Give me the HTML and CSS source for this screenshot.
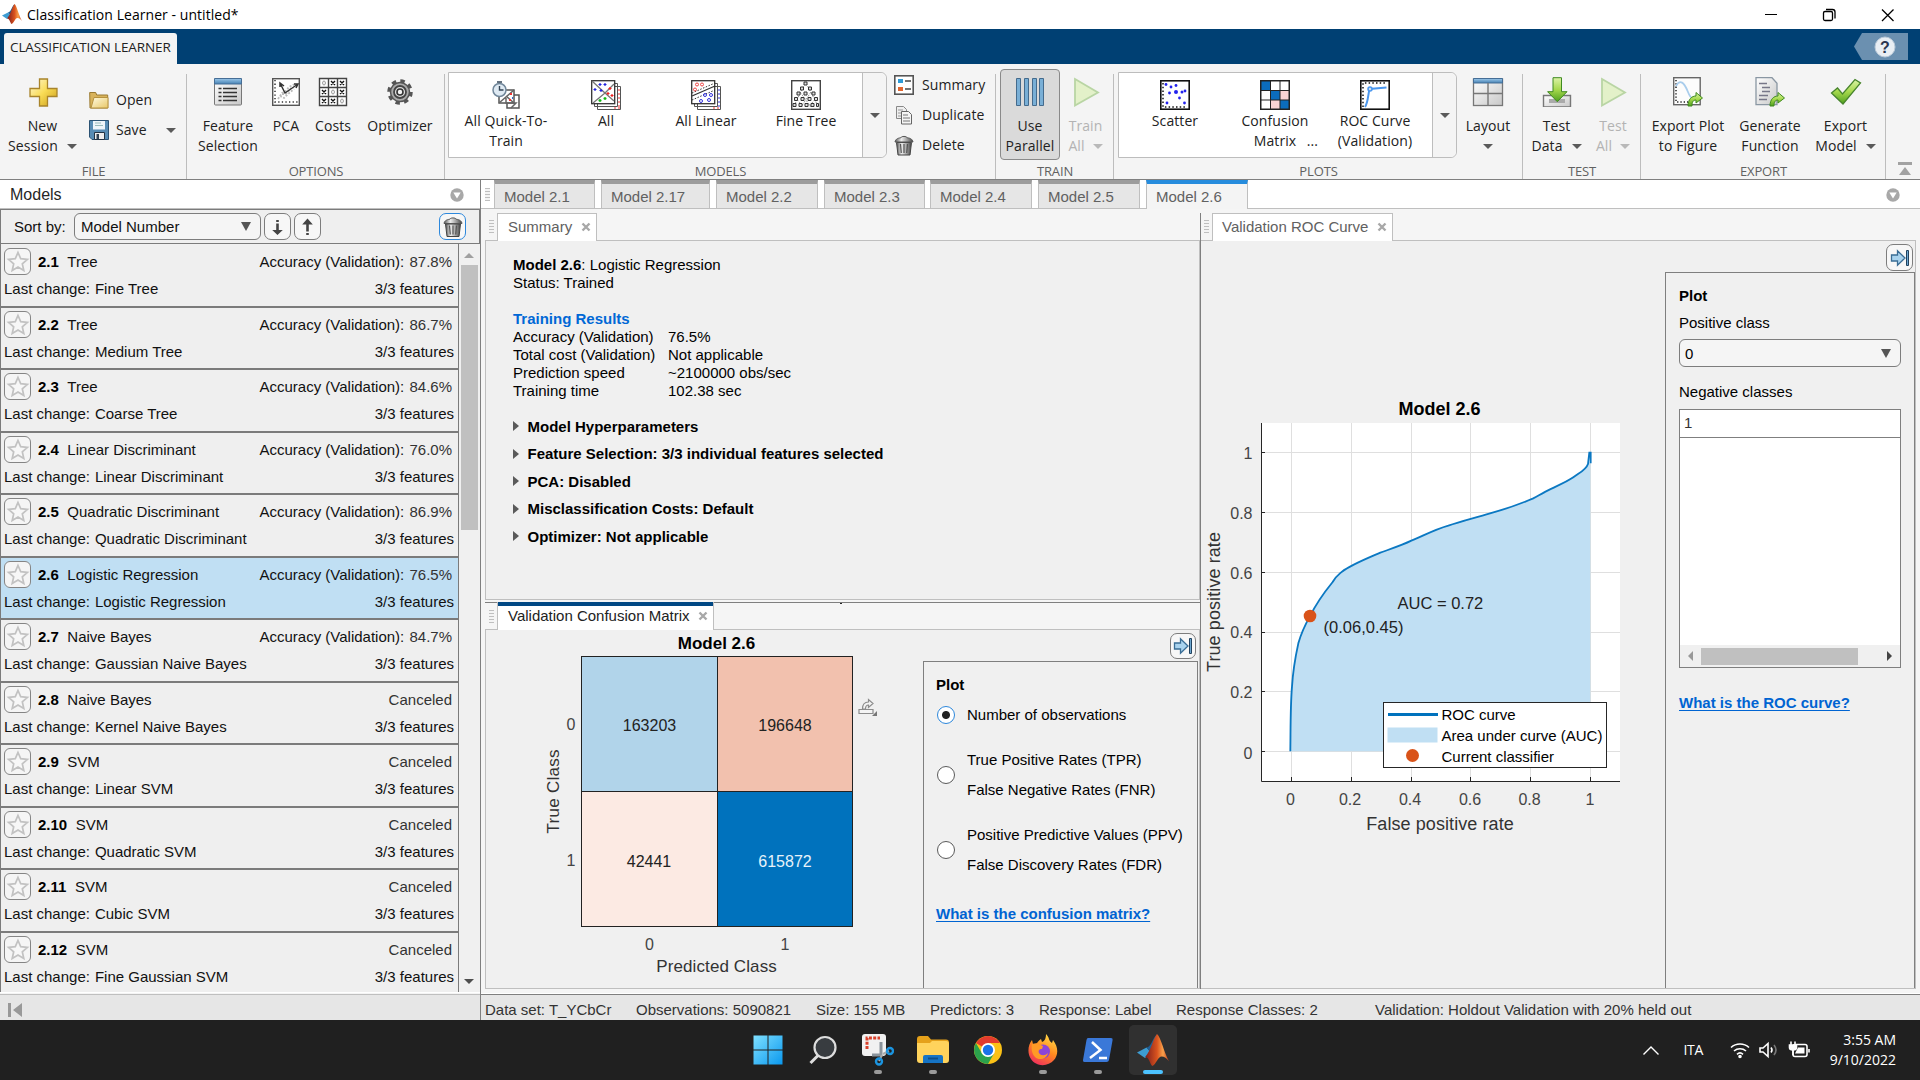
FILE: index.html
```html
<!DOCTYPE html>
<html lang="en">
<head>
<meta charset="utf-8">
<title>Classification Learner - untitled*</title>
<link rel="stylesheet" href="styles.css">
</head>
<body>
<svg class="defs" width="0" height="0">
  <defs>
    <linearGradient id="gold" x1="0" y1="0" x2="1" y2="1"><stop offset="0" stop-color="#fff9dc"/><stop offset=".5" stop-color="#f9dc55"/><stop offset="1" stop-color="#c99a18"/></linearGradient>
    <linearGradient id="folder" x1="0" y1="0" x2="1" y2="1"><stop offset="0" stop-color="#fffbe2"/><stop offset="1" stop-color="#e8c768"/></linearGradient>
    <linearGradient id="blueTop" x1="0" y1="0" x2="0" y2="1"><stop offset="0" stop-color="#9cc8ea"/><stop offset="1" stop-color="#4682b4"/></linearGradient>
    <linearGradient id="grey" x1="0" y1="0" x2="1" y2="1"><stop offset="0" stop-color="#fff"/><stop offset="1" stop-color="#c8c8c8"/></linearGradient>
    <linearGradient id="green" x1="0" y1="0" x2="0" y2="1"><stop offset="0" stop-color="#dcf3a8"/><stop offset=".5" stop-color="#a5d84c"/><stop offset="1" stop-color="#4fa01e"/></linearGradient>
    <linearGradient id="bin" x1="0" y1="0" x2="1" y2="0"><stop offset="0" stop-color="#555"/><stop offset=".35" stop-color="#eee"/><stop offset=".7" stop-color="#999"/><stop offset="1" stop-color="#444"/></linearGradient>
    <linearGradient id="flame" x1="0" y1="0" x2="1" y2="0"><stop offset="0" stop-color="#7a1c1c"/><stop offset=".5" stop-color="#d9531e"/><stop offset=".75" stop-color="#f9a04a"/><stop offset="1" stop-color="#c2391b"/></linearGradient>
    <linearGradient id="fox" x1=".8" y1="0" x2=".3" y2="1"><stop offset="0" stop-color="#ffe14a"/><stop offset=".5" stop-color="#ff8a1f"/><stop offset="1" stop-color="#f0305c"/></linearGradient>
    <linearGradient id="win" x1="0" y1="0" x2="1" y2="1"><stop offset="0" stop-color="#7fe0ff"/><stop offset="1" stop-color="#0a98ee"/></linearGradient>
    <symbol id="star" viewBox="0 0 25 25"><path d="M13 3.500l2.700 6.200 6.700.6-5.100 4.500 1.500 6.700-5.800-3.500-5.800 3.500 1.500-6.700-5.100-4.500 6.700-.6z" fill="#f7f7f7" stroke="#c2c2c2" stroke-width="1.700"/></symbol>
    <symbol id="trash" viewBox="0 0 20 20"><path d="M2.500 7h15l-1.500 12.500h-12z" fill="url(#bin)" stroke="#444"/><path d="M1 6.500C1.500 3 5 2.500 7 2.200 7 .5 13 .5 13 2.200c2 .3 5.500.8 6 4.300z" fill="url(#bin)" stroke="#555"/><path d="M6.500 8.500l.8 9M10 8.500v9M13.500 8.500l-.8 9" stroke="#555" stroke-width="1.200"/></symbol>
    <symbol id="matlab" viewBox="0 0 20 20"><path d="M0 11.500l6-3 3 3.500-4 3z" fill="#3d9cd2"/><path d="M6 8.500C9 8 9.500 3 12.500 0L10 8 9 12z" fill="#1f5f96"/><path d="M12.500 0C9.500 4 9.500 9 5 14.500c2.500-.5 3 4 4.500 5.500 2.500-1 3.500-6 6-6 1.500 0 3 1 4.500 3C17 12 15 2 12.500 0z" fill="url(#flame)"/></symbol>
    <symbol id="play" viewBox="0 0 28 30"><path d="M3 2l23 13.500L3 28.500z" fill="#e3f1c9" stroke="#b9d5a4" stroke-width="1.800"/></symbol>
    <symbol id="panelarrow" viewBox="0 0 20 20"><path d="M1.500 7h6V2.800l7.500 7.200-7.500 7.200V13h-6z" fill="#a9d3ee" stroke="#3a6d95" stroke-width="1.300"/><path d="M16.500 2.500h2v15h-2z" fill="#6da7d0" stroke="#21425f"/></symbol>
    <symbol id="circledown" viewBox="0 0 14 14"><circle cx="7" cy="7" r="6.700" fill="#a8a8a8"/><path d="M3.300 4.500h7.400L7 10.500z" fill="#fff"/></symbol>
    <symbol id="close" viewBox="0 0 10 10"><path d="M1.500 1.500l7 7M8.500 1.500l-7 7" stroke="#a8a8a8" stroke-width="2.400"/></symbol>
    <symbol id="share" viewBox="0 0 16 16"><path d="M1 15C1 8 5 5 9 5V1.500l6.500 5.500L9 12V9C6 9 5 11 5 15z" fill="url(#green)" stroke="#3e8a1c"/></symbol>
  </defs>
</svg>

<header class="titlebar">
  <svg class="app-icon" width="20" height="20"><use href="#matlab"/></svg>
  <span>Classification Learner - untitled*</span>
  <svg class="window-buttons" width="126" height="28" viewBox="0 0 126 28" fill="none" stroke="#000"><path d="M1 13.500h12"/><rect x="59.500" y="10.500" width="9" height="9" rx="1.500" stroke-width="1.300"/><path d="M62 8.500h6.500q2.500 0 2.500 2.500v6.500" stroke-width="1.300"/><path d="M118 8.500l11.500 11.500M129.500 8.500L118 20" stroke-width="1.300"/></svg>
</header>

<nav class="appbar">
  <div class="app-tab">CLASSIFICATION LEARNER</div>
  <svg class="help" width="54" height="27" viewBox="0 0 54 27"><path d="M0 13.500L8 0h46v27H8z" fill="#6b90b0"/><circle cx="31" cy="14" r="10" fill="#e9eef3" stroke="#b9c9d8"/><text x="31" y="19.500" text-anchor="middle" class="help-mark">?</text></svg>
</nav>

<section class="ribbon">
  <div class="group file">
    <div class="tools">
      <div class="tool w-new"><svg width="30" height="30" viewBox="0 0 30 30"><path d="M11.500 2h8v9.500H29v8h-9.500V29h-8v-9.500H2v-8h9.500z" fill="url(#gold)" stroke="#a8842b" stroke-width="1.300"/></svg><span>New</span><span class="split">Session<i class="caret"></i></span></div>
      <div class="small-tools">
        <div class="small"><svg width="20" height="18" viewBox="0 0 20 18"><path d="M1 17L.7 1.500h6l1 2.500h11V17z" fill="#d8b35c" stroke="#9a7a31"/><path d="M2 17L5 6.500h14V17z" fill="url(#folder)" stroke="#b6923f"/></svg><span>Open</span></div>
        <div class="small"><svg width="20" height="20" viewBox="0 0 20 20"><path d="M.5.500h19v19H3l-2.500-2.500z" fill="#578cb4" stroke="#2b5273"/><path d="M4 1h12v8.500H4z" fill="#eef5fa"/><path d="M6 3h6M6 5.500h8" stroke="#9bb"/><path d="M5.500 12.500h10v7h-10z" fill="#eee" stroke="#234"/><path d="M7.500 14h2.500v5H7.500z" fill="#345"/></svg><span>Save</span><i class="caret save-caret"></i></div>
      </div>
    </div>
    <div class="group-label">FILE</div>
  </div>

  <div class="group options">
    <div class="tools">
      <div class="tool w-feature"><svg width="30" height="30" viewBox="0 0 30 30"><rect x="1.500" y="2" width="27" height="26" rx="1" fill="url(#grey)" stroke="#777"/><path d="M1.500 1.500h27V7h-27z" fill="url(#blueTop)" stroke="#466e96"/><path d="M10 11.500h14M10 15.500h14M10 19.500h14M10 23.500h14" stroke="#333" stroke-width="1.500"/><path d="M5.500 11.500h3M5.500 15.500h3M5.500 19.500h3M5.500 23.500h3" stroke="#333" stroke-width="1.600"/></svg><span>Feature</span><span>Selection</span></div>
      <div class="tool w-pca"><svg width="30" height="30" viewBox="0 0 30 30"><rect x="1.700" y="1.700" width="26.600" height="26.600" fill="#fff" stroke="#555" stroke-width="1.400"/><path d="M4 3v22h23" stroke="#333" stroke-width="1.500" stroke-dasharray="1.300 2.300" fill="none"/><path d="M7 22l4-6 3-1 4-5 6-3M9 19l4 2 4-4 6-5M11 17h4l5-6" stroke="#bbb" stroke-width="1.800" stroke-dasharray="2 1.500" fill="none"/><path d="M9 6l5 10L27 7M9 10V6l4 3M23 7h4l-2 4" stroke="#333" stroke-width="1.500" fill="none"/></svg><span>PCA</span></div>
      <div class="tool w-costs"><svg width="30" height="30" viewBox="0 0 30 30"><path d="M1.500 1.500h27v27h-27zM10.500 1.500v27M19.500 1.500v27M1.500 10.500h27M1.500 19.500h27" fill="#fff" stroke="#444" stroke-width="1.400"/><path d="M13 4l4 4m0-4l-4 4M22 4l4 4m0-4l-4 4M4 13l4 4m0-4l-4 4M22 13l4 4m0-4l-4 4M4 22l4 4m0-4l-4 4M13 22l4 4m0-4l-4 4" stroke="#111" stroke-width="1.400"/><g fill="none" stroke="#999"><ellipse cx="6" cy="6" rx="1.400" ry="2"/><ellipse cx="15" cy="15" rx="1.400" ry="2"/><ellipse cx="24" cy="24" rx="1.400" ry="2"/></g></svg><span>Costs</span></div>
      <div class="tool w-optimizer"><svg width="30" height="30" viewBox="0 0 30 30"><circle cx="15" cy="15" r="11" fill="none" stroke="#555" stroke-width="3.500" stroke-dasharray="4.400 4.240"/><circle cx="15" cy="15" r="9.500" fill="#aaa" stroke="#555" stroke-width="1.500"/><circle cx="15" cy="15" r="6" fill="#ddd" stroke="#444" stroke-width="1.800"/><circle cx="15" cy="15" r="3" fill="#f5f5f5" stroke="#333" stroke-width="1.600"/></svg><span>Optimizer</span></div>
    </div>
    <div class="group-label">OPTIONS</div>
  </div>

  <div class="group models">
    <div class="tools">
      <div class="gallery">
        <div class="gallery-item"><svg width="30" height="30" viewBox="0 0 30 30"><path d="M16 15h12v13H16z" fill="#fff" stroke="#555" stroke-width="1.500"/><path d="M8 10h15v13H8z" fill="#fff" stroke="#555" stroke-width="1.500"/><path d="M8 23L23 10M15 16l8 7M15 18v5h10l-5 5" stroke="#666" stroke-width="1.500" fill="none"/><path d="M18 20h2M19 14h2" stroke="#e33" stroke-width="2"/><path d="M21 18h1" stroke="#36c" stroke-width="2"/><circle cx="8.500" cy="10" r="6.500" fill="#dfeaf3" stroke="#71879a" stroke-width="1.500"/><path d="M8.500 6v4h4M6 2h5" stroke="#345" stroke-width="1.400" fill="none"/></svg><span>All Quick-To-</span><span>Train</span></div>
        <div class="gallery-item"><svg width="30" height="30" viewBox="0 0 30 30"><path d="M6.500 6.500h23v23h-23zM3.500 3.500h23v23h-23z" fill="#fff" stroke="#555"/><path d="M23 28h6M28 9v19" stroke="#e33" stroke-dasharray="2 2"/><rect x=".7" y=".7" width="23" height="23" fill="#fff" stroke="#333" stroke-width="1.300"/><path d="M1 1l13 12L23 4M14 13L2 23M14 13l9 8" stroke="#777" stroke-width="1.300" fill="none"/><path d="M9 3v3M14 3v3M4 8v3M10 9v3M7.500 4.500h3M12.500 4.500h3M2.500 9.500h3M8.500 10.500h3" stroke="#22d" stroke-width="1.200"/><path d="M19 7v3M17.500 8.500h3M21 14v3M19.500 15.500h3M17 12v3M15.500 13.500h3" stroke="#e22" stroke-width="1.200"/><path d="M14 17v3M12.500 18.500h3M9 19v3M7.500 20.500h3" stroke="#1b1" stroke-width="1.300"/></svg><span>All</span></div>
        <div class="gallery-item"><svg width="30" height="30" viewBox="0 0 30 30"><path d="M6.500 6.500h23v23h-23zM3.500 3.500h23v23h-23z" fill="#fff" stroke="#555"/><path d="M22 28h6" stroke="#e33" stroke-dasharray="2 2"/><path d="M28 9v19" stroke="#33d" stroke-dasharray="2 2"/><rect x=".7" y=".7" width="23" height="23" fill="#fff" stroke="#333" stroke-width="1.300"/><path d="M1 16L24 6" stroke="#333" stroke-width="1.200"/><path d="M1 13L24 3M1 20L24 10" stroke="#333" stroke-dasharray="1.500 1.500"/><g fill="none" stroke="#e44"><circle cx="6" cy="4.500" r="1.500"/><circle cx="11" cy="4.500" r="1.500"/><circle cx="4" cy="9.500" r="1.500"/></g><g fill="none" stroke="#33d"><circle cx="14" cy="15" r="1.500"/><circle cx="18" cy="20" r="1.500"/><circle cx="10" cy="21" r="1.500"/><circle cx="20" cy="15" r="1.500"/></g></svg><span>All Linear</span></div>
        <div class="gallery-item"><svg width="30" height="30" viewBox="0 0 30 30"><rect x=".7" y=".7" width="28.600" height="28.600" fill="#fff" stroke="#444" stroke-width="1.400"/><path d="M14 3L3 26M15 3l12 23M9 12l11 15M20 12L10 27M6 19l6 8M24 19l-6 8" stroke="#999" stroke-dasharray="2 1.500"/><g fill="#ddd" stroke="#333"><path d="M13 2h3v3h-3zM9.500 7h3v3h-3zM17.500 7h3v3h-3zM6 12h3v3H6zM13 12h3v3h-3zM21 12h3v3h-3zM3.500 17.500h3v3h-3zM10 17.500h3v3h-3zM17 17.500h3v3h-3zM23.500 17.500h3v3h-3zM2 23.500h3v3H2zM8 23.500h3v3H8zM14 23.500h3v3h-3zM20 23.500h3v3h-3zM25.500 23.500h2v3h-2z"/></g></svg><span>Fine Tree</span></div>
        <div class="gallery-more"><i class="caret"></i></div>
      </div>
      <div class="side-tools">
        <div class="small"><svg width="20" height="20" viewBox="0 0 20 20"><rect x=".8" y=".8" width="18.400" height="18.400" fill="#fff" stroke="#555" stroke-width="1.600"/><path d="M4 4h5v4H4z" fill="#2f9bd7"/><path d="M4 12h5v4H4z" fill="#e2662f"/><path d="M11 6h6M11 14h6" stroke="#444" stroke-width="1.400"/></svg><span>Summary</span></div>
        <div class="small"><svg width="20" height="20" viewBox="0 0 20 20"><path d="M2.500 1.500h7l3 3v9h-10z" fill="#eee" stroke="#888"/><path d="M4 5h5M4 8h5M4 11h4" stroke="#999"/><path d="M7.500 6.500h7l3 3v9.500h-10z" fill="#f5f5f5" stroke="#666"/><path d="M9 10h5M9 13h7M9 16h7" stroke="#777"/></svg><span>Duplicate</span></div>
        <div class="small"><svg width="20" height="21"><use href="#trash"/></svg><span>Delete</span></div>
      </div>
    </div>
    <div class="group-label">MODELS</div>
  </div>

  <div class="group train">
    <div class="tools">
      <div class="tool pressed"><svg width="30" height="30" viewBox="0 0 30 30"><g fill="#79afd6" stroke="#446b8d"><path d="M1.500 1.500h4v27h-4zM9.500 1.500h4v27h-4zM17.500 1.500h4v27h-4zM24.500 1.500h4v27h-4z"/></g></svg><span>Use</span><span>Parallel</span></div>
      <div class="tool w-train disabled"><svg width="30" height="30"><use href="#play"/></svg><span>Train</span><span class="split">All<i class="caret"></i></span></div>
    </div>
    <div class="group-label">TRAIN</div>
  </div>

  <div class="group plots">
    <div class="tools">
      <div class="gallery">
        <div class="gallery-item"><svg width="30" height="30" viewBox="0 0 30 30"><rect x=".8" y=".8" width="28.400" height="28.400" fill="#fff" stroke="#111" stroke-width="1.600"/><path d="M3 3v24h24" fill="none" stroke="#111" stroke-width="1.500" stroke-dasharray="1.500 2.200"/><g fill="#22e"><circle cx="6" cy="4.500" r="1.400"/><circle cx="11" cy="7" r="1.400"/><circle cx="16" cy="5.500" r="1.400"/><circle cx="9.500" cy="13" r="1.400"/><circle cx="16" cy="12" r="2"/><circle cx="22" cy="12" r="1.500"/><circle cx="25" cy="11" r="1.400"/><circle cx="19.500" cy="18" r="1.400"/><circle cx="7" cy="23" r="1.400"/><circle cx="24.500" cy="23" r="1.400"/></g></svg><span>Scatter</span></div>
        <div class="gallery-item"><svg width="30" height="30" viewBox="0 0 30 30"><path d="M0 0h30v30H0z" fill="#222"/><path d="M11 1.500h8.500V10H11zM20.500 1.500h8V10h-8zM1.500 11H10v8.500H1.500zM1.500 20.500H10v8H1.500z" fill="#fff"/><path d="M1.500 1.500H10V10H1.500zM11 11h8.500v8.500H11zM20.500 20.500h8v8h-8z" fill="#0b6cbc"/><path d="M20.500 11h8v8.500h-8zM11 20.500h8.500v8H11z" fill="#f8d3d3"/></svg><span>Confusion</span><span class="ellipsis">Matrix<b>...</b></span></div>
        <div class="gallery-item"><svg width="30" height="30" viewBox="0 0 30 30"><rect x=".8" y=".8" width="28.400" height="28.400" fill="#fff" stroke="#111" stroke-width="1.600"/><path d="M3 27V3h24" fill="none" stroke="#111" stroke-width="1.500" stroke-dasharray="1.500 2.200"/><path d="M5 27C8 23 8 15 9.500 9l17-1.500" fill="none" stroke="#4a97ee" stroke-width="2"/><circle cx="10" cy="9" r="2" fill="#cde" stroke="#4a97ee" stroke-width="1.500"/></svg><span>ROC Curve</span><span>(Validation)</span></div>
        <div class="gallery-more"><i class="caret"></i></div>
      </div>
      <div class="tool w-layout"><svg width="32" height="30" viewBox="0 0 32 30"><rect x="1.500" y="2" width="29" height="26.500" fill="url(#grey)" stroke="#777" stroke-width="1.300"/><path d="M1.500 1.500h29v4.500h-29z" fill="url(#blueTop)" stroke="#466e96"/><path d="M16 6v22M2 16.500h28" stroke="#777" stroke-width="1.400"/></svg><span>Layout</span><span class="split only"><i class="caret"></i></span></div>
    </div>
    <div class="group-label plots-label">PLOTS</div>
  </div>

  <div class="group test">
    <div class="tools">
      <div class="tool w-testdata"><svg width="30" height="30" viewBox="0 0 30 30"><path d="M1.500 18.500h27V30h-27z" fill="url(#grey)" stroke="#777" stroke-width="1.400"/><path d="M7 22h16v4H7z" fill="#aaa"/><path d="M11 .7h8.500v14h5.500l-9.700 10-9.700-10H11z" fill="url(#green)" stroke="#3f8a20"/></svg><span>Test</span><span class="split">Data<i class="caret"></i></span></div>
      <div class="tool w-testall disabled"><svg width="30" height="30"><use href="#play"/></svg><span>Test</span><span class="split">All<i class="caret"></i></span></div>
    </div>
    <div class="group-label">TEST</div>
  </div>

  <div class="group export">
    <div class="tools">
      <div class="tool w-plot"><svg width="32" height="30" viewBox="0 0 32 30"><rect x="1.700" y=".7" width="26.500" height="27" fill="#fcfcfc" stroke="#666" stroke-width="1.400"/><path d="M4 3v22h12" fill="none" stroke="#222" stroke-width="1.500" stroke-dasharray="1.300 2"/><path d="M4 9C8 2 12 5 16 15s6 5 8 4" fill="none" stroke="#a9cdec" stroke-width="1.800"/><use href="#share" x="15" y="14" width="16" height="16"/></svg><span>Export Plot</span><span>to Figure</span></div>
      <div class="tool w-generate"><svg width="32" height="30" viewBox="0 0 32 30"><path d="M2 .7h16l5 5.500v21.500H2z" fill="url(#grey)" stroke="#8a97a3" stroke-width="1.300"/><path d="M5 6.500h8M8 10.500h8M8 14.500h8M5 18.500h9M5 22.500h8" stroke="#778" stroke-width="1.600"/><use href="#share" x="15" y="14" width="16" height="16"/></svg><span>Generate</span><span>Function</span></div>
      <div class="tool w-exportmodel"><svg width="32" height="30" viewBox="0 0 32 30"><path d="M1.500 16l6-5 5 6L25 2.500l5.500 3.500L13 27z" fill="url(#green)" stroke="#47842c" stroke-width="1.300"/></svg><span>Export</span><span class="split">Model<i class="caret"></i></span></div>
    </div>
    <div class="group-label">EXPORT</div>
  </div>
  <svg class="collapse" width="14" height="14" viewBox="0 0 14 14" fill="#a2a2a2"><path d="M0 0h14v3H0zM7 5l6 8H1z"/></svg>
</section>

<main class="workspace">
  <aside class="model-pane">
    <div class="pane-title">Models<svg width="14" height="14"><use href="#circledown"/></svg></div>
    <div class="sortbar">
      <span>Sort by:</span>
      <div class="select sort-select">Model Number<i class="tri"></i></div>
      <div class="icon-btn"><svg width="25" height="25" viewBox="0 0 25 25"><path d="M11.200 6h2.600v2h-2.600zM11.200 9.500h2.600V16h4L12.500 21l-5.300-5h4z" fill="#444"/></svg></div>
      <div class="icon-btn"><svg width="25" height="25" viewBox="0 0 25 25"><path d="M11.200 19h2.600v2h-2.600zM11.200 17.500h2.600V10.500h4L12.500 4.500l-5.300 6h4z" fill="#444"/></svg></div>
      <div class="icon-btn delete"><svg width="20" height="20"><use href="#trash"/></svg></div>
    </div>
    <div class="list-wrap">
      <div class="model-list">
        <article class="model"><div class="line"><i class="fav"><svg><use href="#star"/></svg></i><b>2.1</b><span>Tree</span><em>Accuracy (Validation): <s>87.8%</s></em></div><div class="line sub"><span>Last change:</span><span>Fine Tree</span><em>3/3 features</em></div></article>
        <article class="model"><div class="line"><i class="fav"><svg><use href="#star"/></svg></i><b>2.2</b><span>Tree</span><em>Accuracy (Validation): <s>86.7%</s></em></div><div class="line sub"><span>Last change:</span><span>Medium Tree</span><em>3/3 features</em></div></article>
        <article class="model"><div class="line"><i class="fav"><svg><use href="#star"/></svg></i><b>2.3</b><span>Tree</span><em>Accuracy (Validation): <s>84.6%</s></em></div><div class="line sub"><span>Last change:</span><span>Coarse Tree</span><em>3/3 features</em></div></article>
        <article class="model"><div class="line"><i class="fav"><svg><use href="#star"/></svg></i><b>2.4</b><span>Linear Discriminant</span><em>Accuracy (Validation): <s>76.0%</s></em></div><div class="line sub"><span>Last change:</span><span>Linear Discriminant</span><em>3/3 features</em></div></article>
        <article class="model"><div class="line"><i class="fav"><svg><use href="#star"/></svg></i><b>2.5</b><span>Quadratic Discriminant</span><em>Accuracy (Validation): <s>86.9%</s></em></div><div class="line sub"><span>Last change:</span><span>Quadratic Discriminant</span><em>3/3 features</em></div></article>
        <article class="model selected"><div class="line"><i class="fav"><svg><use href="#star"/></svg></i><b>2.6</b><span>Logistic Regression</span><em>Accuracy (Validation): <s>76.5%</s></em></div><div class="line sub"><span>Last change:</span><span>Logistic Regression</span><em>3/3 features</em></div></article>
        <article class="model"><div class="line"><i class="fav"><svg><use href="#star"/></svg></i><b>2.7</b><span>Naive Bayes</span><em>Accuracy (Validation): <s>84.7%</s></em></div><div class="line sub"><span>Last change:</span><span>Gaussian Naive Bayes</span><em>3/3 features</em></div></article>
        <article class="model"><div class="line"><i class="fav"><svg><use href="#star"/></svg></i><b>2.8</b><span>Naive Bayes</span><em><s>Canceled</s></em></div><div class="line sub"><span>Last change:</span><span>Kernel Naive Bayes</span><em>3/3 features</em></div></article>
        <article class="model"><div class="line"><i class="fav"><svg><use href="#star"/></svg></i><b>2.9</b><span>SVM</span><em><s>Canceled</s></em></div><div class="line sub"><span>Last change:</span><span>Linear SVM</span><em>3/3 features</em></div></article>
        <article class="model"><div class="line"><i class="fav"><svg><use href="#star"/></svg></i><b>2.10</b><span>SVM</span><em><s>Canceled</s></em></div><div class="line sub"><span>Last change:</span><span>Quadratic SVM</span><em>3/3 features</em></div></article>
        <article class="model"><div class="line"><i class="fav"><svg><use href="#star"/></svg></i><b>2.11</b><span>SVM</span><em><s>Canceled</s></em></div><div class="line sub"><span>Last change:</span><span>Cubic SVM</span><em>3/3 features</em></div></article>
        <article class="model"><div class="line"><i class="fav"><svg><use href="#star"/></svg></i><b>2.12</b><span>SVM</span><em><s>Canceled</s></em></div><div class="line sub"><span>Last change:</span><span>Fine Gaussian SVM</span><em>3/3 features</em></div></article>
      </div>
      <div class="scrollbar"><i class="up"></i><div class="thumb"></div><i class="down"></i></div>
    </div>
    <footer class="status left"><svg width="14" height="14" viewBox="0 0 14 14" fill="#999"><path d="M0 0h3v14H0zM14 0v14L5 7z"/></svg></footer>
  </aside>

  <section class="documents">
    <div class="doc-tabs">
      <i class="grip"></i>
      <div class="doc-tab t1">Model 2.1</div>
      <div class="doc-tab t2">Model 2.17</div>
      <div class="doc-tab t3">Model 2.2</div>
      <div class="doc-tab t4">Model 2.3</div>
      <div class="doc-tab t5">Model 2.4</div>
      <div class="doc-tab t6">Model 2.5</div>
      <div class="doc-tab t7 active">Model 2.6</div>
      <svg width="14" height="14"><use href="#circledown"/></svg>
    </div>

    <div class="doc-body">
      <div class="column main-column">
        <section class="panel summary-panel">
          <div class="panel-tabs"><i class="grip"></i><div class="panel-tab">Summary<svg width="10" height="10"><use href="#close"/></svg></div></div>
          <div class="panel-body summary">
            <p><b>Model 2.6</b>: Logistic Regression</p>
            <p>Status: Trained</p>
            <h3>Training Results</h3>
            <dl>
              <dt>Accuracy (Validation)</dt><dd>76.5%</dd>
              <dt>Total cost (Validation)</dt><dd>Not applicable</dd>
              <dt>Prediction speed</dt><dd>~2100000 obs/sec</dd>
              <dt>Training time</dt><dd>102.38 sec</dd>
            </dl>
            <ul>
              <li>Model Hyperparameters</li>
              <li>Feature Selection: 3/3 individual features selected</li>
              <li>PCA: Disabled</li>
              <li>Misclassification Costs: Default</li>
              <li>Optimizer: Not applicable</li>
            </ul>
          </div>
        </section>
        <section class="panel confusion-panel">
          <div class="panel-tabs"><i class="grip"></i><div class="panel-tab focused">Validation Confusion Matrix<svg width="10" height="10"><use href="#close"/></svg></div><i class="splitter-dot"></i></div>
          <div class="panel-body split-body">
            <svg class="chart" width="437" height="358" viewBox="486 630 437 358">
              <g stroke="#222" stroke-width="1">
                <rect x="581.500" y="656.500" width="136" height="135" fill="#b1d4ea"/>
                <rect x="717.500" y="656.500" width="135" height="135" fill="#f2c1ae"/>
                <rect x="581.500" y="791.500" width="136" height="135" fill="#fceae3"/>
                <rect x="717.500" y="791.500" width="135" height="135" fill="#0072bd"/>
              </g>
              <text class="plot-title sz17" x="716.500" y="649">Model 2.6</text>
              <g class="tick cell"><text x="649.500" y="730.500">163203</text><text x="785" y="730.500">196648</text><text x="649" y="866.500">42441</text><text class="light" x="785" y="866.500">615872</text></g>
              <g class="tick"><text x="571" y="729.500">0</text><text x="571" y="866">1</text><text x="649.500" y="949.500">0</text><text x="785" y="949.500">1</text></g>
              <text class="axis sz17" x="716.500" y="972" textLength="120.500">Predicted Class</text>
              <text class="axis sz17" transform="translate(559 791.500) rotate(-90)" textLength="84">True Class</text>
              <g fill="#f4f4f4" stroke="#8c8c8c" stroke-width="1.200"><path d="M859 709.500h14v4h-14z"/><path d="M862.500 709c0-5 2.500-7 6-7v-2.500l4.500 4-4.500 4V705c-2 0-3 1.500-3 4z"/></g><path d="M877 711v5h-5z" fill="#777"/>
            </svg>
            <div class="plot-options confusion-options">
              <div class="option-bar"><div class="icon-btn"><svg width="20" height="20"><use href="#panelarrow"/></svg></div></div>
              <div class="option-box">
                <h4>Plot</h4>
                <label class="one"><i class="radio on"></i><span>Number of observations</span></label>
                <label><i class="radio"></i><span>True Positive Rates (TPR)<br>False Negative Rates (FNR)</span></label>
                <label><i class="radio"></i><span>Positive Predictive Values (PPV)<br>False Discovery Rates (FDR)</span></label>
                <a>What is the confusion matrix?</a>
              </div>
            </div>
          </div>
        </section>
      </div>

      <section class="panel roc-panel column">
        <div class="panel-tabs"><i class="grip"></i><div class="panel-tab">Validation ROC Curve<svg width="10" height="10"><use href="#close"/></svg></div></div>
        <div class="panel-body split-body">
          <svg class="chart" width="464" height="747" viewBox="1201 241 464 747">
            <path d="M1261 423h359v358h-359z" fill="#fff"/>
            <path d="M1291.500 423v358M1351.500 423v358M1411.500 423v358M1470.500 423v358M1530.500 423v358M1590.500 423v358M1261 452.500h359M1261 512.500h359M1261 572.500h359M1261 632.500h359M1261 691.500h359M1261 751.500h359" stroke="#dfdfdf"/>
            <g transform="translate(1190 380) scale(.33333)">
              <path d="M301 1114C302 1040 301 980 306 920C309 870 314 840 325 790C332 765 345 735 361 707C375 678 398 643 428 606C436 590 446 584 456 575C480 556 515 542 571 518C610 504 640 494 664 482C700 468 730 450 775 437C810 424 850 415 900 400C940 389 990 372 1028 356C1050 344 1065 335 1080 328C1110 314 1135 303 1150 292C1170 277 1188 270 1194 252L1201 245V1114z" fill="#c0dff3"/>
              <path d="M301 1114C302 1040 301 980 306 920C309 870 314 840 325 790C332 765 345 735 361 707C375 678 398 643 428 606C436 590 446 584 456 575C480 556 515 542 571 518C610 504 640 494 664 482C700 468 730 450 775 437C810 424 850 415 900 400C940 389 990 372 1028 356C1050 344 1065 335 1080 328C1110 314 1135 303 1150 292C1170 277 1188 270 1194 252L1198 218H1202V250" fill="none" stroke="#0b78c2" stroke-width="5.500"/>
              <circle cx="360" cy="708" r="19" fill="#d95319"/>
            </g>
            <path d="M1261.500 423v358.500H1620M1261 452.500h4M1261 512.500h4M1261 572.500h4M1261 632.500h4M1261 691.500h4M1261 751.500h4M1291.500 781v-4M1351.500 781v-4M1411.500 781v-4M1470.500 781v-4M1530.500 781v-4M1590.500 781v-4" stroke="#262626" fill="none"/>
            <text class="plot-title sz18" x="1439.500" y="415">Model 2.6</text>
            <g class="tick end"><text x="1252.500" y="458.500">1</text><text x="1252.500" y="518.500">0.8</text><text x="1252.500" y="578.500">0.6</text><text x="1252.500" y="637.500">0.4</text><text x="1252.500" y="698">0.2</text><text x="1252.500" y="758.500">0</text></g>
            <g class="tick"><text x="1290.500" y="804.500">0</text><text x="1350" y="804.500">0.2</text><text x="1410" y="804.500">0.4</text><text x="1470" y="804.500">0.6</text><text x="1529.500" y="804.500">0.8</text><text x="1590" y="804.500">1</text></g>
            <text class="axis sz18" x="1440" y="830" textLength="147.500">False positive rate</text>
            <text class="axis sz18" transform="translate(1220 602) rotate(-90)" textLength="140">True positive rate</text>
            <text class="note" x="1397.500" y="608.500">AUC = 0.72</text>
            <text class="note" x="1323.500" y="632.500" textLength="80">(0.06,0.45)</text>
            <rect x="1383.500" y="702.500" width="223" height="65" fill="#fff" stroke="#262626"/>
            <path d="M1388 714.500h50" stroke="#0072bd" stroke-width="3"/><path d="M1387.500 727.500h50v15h-50z" fill="#c0dff3"/><circle cx="1412.500" cy="755.500" r="6.500" fill="#d95319"/>
            <g class="legend"><text x="1441.500" y="720">ROC curve</text><text x="1441.500" y="741">Area under curve (AUC)</text><text x="1441.500" y="762">Current classifier</text></g>
          </svg>
          <div class="plot-options roc-options">
            <div class="option-bar"><div class="icon-btn"><svg width="20" height="20"><use href="#panelarrow"/></svg></div></div>
            <div class="option-box">
              <h4>Plot</h4>
              <p>Positive class</p>
              <div class="select">0<i class="tri"></i></div>
              <p class="negative">Negative classes</p>
              <div class="listbox"><div class="listrow">1</div><div class="hscroll"><i class="prev"></i><div class="hthumb"></div><i class="next"></i></div></div>
              <a>What is the ROC curve?</a>
            </div>
          </div>
        </div>
      </section>
    </div>

    <footer class="status facts">
      <span class="f1">Data set: T_YCbCr</span><span class="f2">Observations: 5090821</span><span class="f3">Size: 155 MB</span><span class="f4">Predictors: 3</span><span class="f5">Response: Label</span><span class="f6">Response Classes: 2</span><span class="f7">Validation: Holdout Validation with 20% held out</span>
    </footer>
  </section>
</main>

<footer class="taskbar">
  <div class="task-icons">
    <div class="task"><svg width="32" height="32" viewBox="0 0 32 32"><path d="M1.500 1.500h14v14h-14zM16.500 1.500h14v14h-14zM1.500 16.500h14v14h-14zM16.500 16.500h14v14h-14z" fill="url(#win)"/></svg></div>
    <div class="task"><svg width="32" height="32" viewBox="0 0 32 32"><circle cx="18" cy="13.500" r="10.500" fill="#383c40" stroke="#ddd" stroke-width="2.200"/><path d="M11 21.500l-7.500 7.500" stroke="#ddd" stroke-width="3"/></svg></div>
    <div class="task running"><svg width="32" height="32" viewBox="0 0 32 32"><rect x="0" y="0" width="24" height="22" rx="3" fill="#f1f1f1"/><path d="M5 15V4h13" fill="none" stroke="#d8402b" stroke-width="3" stroke-dasharray="3 1.300"/><path d="M19 8v13H10" fill="none" stroke="#8b949c" stroke-width="3"/><path d="M20 21l-3 6M21 20l6-3" stroke="#aaa" stroke-width="2"/><g fill="none" stroke="#1b94e0" stroke-width="2.400"><circle cx="17" cy="27.500" r="3"/><circle cx="28" cy="17" r="3"/></g></svg></div>
    <div class="task running"><svg width="32" height="32" viewBox="0 0 32 32"><path d="M0 5q0-3 3-3h8l3 3.500h15q3 0 3 3V14H0z" fill="#e5a11a"/><path d="M0 9h13l2-2h14q3 0 3 3v16q0 3-3 3H3q-3 0-3-3z" fill="#ffd35c"/><path d="M6 29v-6q0-2 2-2h16q2 0 2 2v6z" fill="#1674c5"/><path d="M11 24.500h10" stroke="#0c4e8a" stroke-width="2"/></svg></div>
    <div class="task"><svg width="32" height="32" viewBox="0 0 32 32"><circle cx="16" cy="16" r="14" fill="#fbc116"/><path d="M16 16L3.900 9A14 14 0 0 1 28.100 9H16z" fill="#e33b2e"/><path d="M3.900 9A14 14 0 0 0 16 30l6-10.500-6-3.500-6 3.500z" fill="#2ba24c"/><circle cx="16" cy="16" r="7" fill="#fff"/><circle cx="16" cy="16" r="5.200" fill="#1a73e8"/></svg></div>
    <div class="task running"><svg width="32" height="32" viewBox="0 0 32 32"><path d="M19 0c4 4 2 6 6 9l1-3c6 8 5 15 1 20-6 7-18 7-23-1C0 19 1 11 5 6l1 4 4-1c1-1 2-3 4-4l1 3c3-1 4-4 4-8z" fill="url(#fox)"/><circle cx="16" cy="17.500" r="7" fill="#8c45d8"/><path d="M5 10c5-1 8 1 11 2l-1 3c-3 0-4 2-3 4 2 3 6 3 9 0-1 6-9 8-13 4-3-3-4-8-3-13z" fill="#ff9a26"/></svg></div>
    <div class="task running"><svg width="32" height="32" viewBox="0 0 32 32"><path d="M6 4h23q2 0 1.600 2L27 26q-.4 2-2.500 2h-22Q.5 28 1 26L4.500 6Q4.900 4 6 4z" fill="#3a78d8"/><path d="M10 8l8.500 8L8 24M17 24h8" fill="none" stroke="#fff" stroke-width="2.500"/></svg></div>
    <div class="task current"><svg width="32" height="32"><use href="#matlab"/></svg></div>
  </div>
  <div class="tray">
    <svg width="18" height="12" viewBox="0 0 18 12"><path d="M1.500 10.500L9 3l7.500 7.500" fill="none" stroke="#fff" stroke-width="1.400"/></svg>
    <span class="lang">ITA</span>
    <svg class="tray-icons" width="82" height="20" viewBox="0 0 82 20" fill="none" stroke="#fff" stroke-width="1.600"><path d="M1 7.500a13.500 13.500 0 0 1 18 0M4 11a9 9 0 0 1 12 0M7 14.300a4.500 4.500 0 0 1 6 0"/><circle cx="10" cy="16.500" r="1" fill="#fff"/><path d="M30 8h3l5-4.500v13L33 12h-3zM41 7.500q2 2.500 0 5"/><path d="M44 5q4 5 0 10" stroke="#777"/><rect x="63" y="4.500" width="14" height="12" rx="2"/><path d="M79 9v3.500"/><path d="M68 7.500h6.500v6H65z" fill="#fff" stroke="none"/><path d="M61 1.500v3M65 1.500v3M59.500 5h7v2.500q0 2.500-3.500 2.500t-3.500-2.500zM63 10v5" fill="#fff"/></svg>
    <div class="clock"><span>3:55 AM</span><span>9/10/2022</span></div>
  </div>
</footer>
</body>
</html>
```
FILE: styles.css
```css
* { box-sizing: border-box; }
body {
  margin: 0; width: 1920px; height: 1080px; overflow: hidden;
  display: flex; flex-direction: column;
  font: 15px "Liberation Sans", Arial, sans-serif; color: #111; background: #f4f4f4;
}
.defs { position: absolute; }
svg { display: block; flex: none; }
p, h3, h4, dl, dd, ul { margin: 0; padding: 0; }
i, em { font-style: normal; }
s { text-decoration: none; color: #333; }

/* Window title */
.titlebar { height: 29px; flex: none; background: #fff; display: flex; align-items: center; padding-left: 2px; font: 14px "Open Sans", sans-serif; color: #000; }
.titlebar span { margin-left: 5px; letter-spacing: .05px; }
.app-icon { margin-top: -1px; }
.window-buttons { margin: 0 30px 0 auto; overflow: visible; }

.appbar { height: 35px; flex: none; background: #004073; display: flex; justify-content: space-between; padding: 4px 12px 0 4px; }
.app-tab { width: 173px; height: 31px; background: #f4f4f4; border-radius: 3px 3px 0 0; font: 13.500px/28px "Open Sans", sans-serif; letter-spacing: -.12px; padding-left: 6px; white-space: nowrap; color: #222; }
.help-mark { font: bold 16px "Liberation Sans", sans-serif; fill: #2a3550; }

/* Ribbon */
.ribbon { height: 116px; flex: none; display: flex; background: #f4f4f4; border-bottom: 1px solid #7f7f7f; font: 14px/20px "Open Sans", sans-serif; color: #222; letter-spacing: .08px; }
.group { display: flex; flex-direction: column; height: 115px; position: relative; flex: none; }
.group::after { content: ""; position: absolute; right: 0; top: 10px; bottom: 0; width: 1px; background: #bdbdbd; }
.group-label { height: 17px; line-height: 18px; text-align: center; color: #616161; font-size: 13px; letter-spacing: -.15px; }
.tools { display: flex; height: 98px; }
.file { width: 187px; } .options { width: 258px; } .models { width: 551px; }
.train { width: 118px; } .plots { width: 409px; } .test { width: 118px; } .export { width: 245px; }
.tool { display: flex; flex-direction: column; align-items: center; padding-top: 13px; white-space: nowrap; flex: none; }
.tool svg { margin-bottom: 9px; }
.tool span { height: 20px; }
.split { display: flex; align-items: center; gap: 9px; }
.only { padding-top: 0; }
.caret { width: 0; height: 0; flex: none; border: 5px solid transparent; border-top-color: #5a5a5a; border-bottom: 0; }
.disabled { color: #b3b3b3; }
.disabled .caret { border-top-color: #b9b9b9; }
.disabled .split { gap: 8px; }
.w-new { width: 85px; }
.options .w-feature { width: 82px; }
.options .w-pca { width: 34px; }
.options .w-costs { width: 60px; }
.options .w-optimizer { width: 74px; }
.small-tools { padding: 21px 0 0 4px; }
.small { display: flex; align-items: center; height: 30px; }
.small svg { margin-right: 7px; }
.save-caret { margin-left: 19px; }
.gallery { display: flex; height: 86px; margin: 8px 0 0 3px; border: 1px solid #bdbdbd; border-radius: 0 6px 6px 0; background: #fff; flex: none; }
.gallery-item { width: 100px; display: flex; flex-direction: column; align-items: center; padding-top: 7px; white-space: nowrap; }
.gallery-item svg { margin-bottom: 1px; }
.gallery-item:first-child { margin-left: 7px; }
.gallery-more { width: 24px; margin-left: auto; background: #f4f4f4; border-left: 1px solid #bdbdbd; border-radius: 0 6px 6px 0; display: flex; align-items: center; justify-content: center; }
.models .gallery { width: 439px; }
.plots .gallery { width: 339px; margin-left: 4px; }
.plots .gallery-item:first-child { margin-left: 6px; }
.ellipsis { position: relative; }
.ellipsis b { position: absolute; left: 53px; top: 0; font-weight: 400; }
.side-tools { padding: 6px 0 0 7px; }
.side-tools .small svg { margin-right: 8px; }
.pressed { width: 60px; height: 91px; margin: 5px 0 0 4px; padding-top: 7px; background: #dadada; border: 1px solid #8a8a8a; border-radius: 4px; }
.w-train { width: 51px; }
.w-layout { width: 62px; }
.w-testdata { width: 67px; } .w-testall { width: 46px; }
.w-plot { width: 94px; } .w-generate { width: 70px; } .w-exportmodel { width: 81px; }
.collapse { margin: 98px 0 0 12px; }

/* Workspace */
.workspace { display: flex; height: 840px; flex: none; }
.model-pane { width: 481px; display: flex; flex-direction: column; border-right: 1px solid #7f7f7f; flex: none; }
.pane-title { height: 29px; flex: none; background: #fff; border-bottom: 1px solid #bfbfbf; display: flex; align-items: center; justify-content: space-between; padding: 1px 16px 0 10px; font-size: 16px; color: #262626; }
.sortbar { height: 35px; flex: none; display: flex; align-items: center; border: 1px solid #7b7b7b; background: #efefef; padding-left: 13px; }
.sortbar > span { width: 60px; }
.select { display: flex; align-items: center; justify-content: space-between; background: #f5f5f5; border: 1px solid #7d7d7d; border-radius: 6px; }
.sort-select { width: 187px; height: 27px; padding: 0 9px 0 6px; margin-right: 3px; }
.tri { width: 0; height: 0; border: 5px solid transparent; border-top: 9px solid #555; border-bottom: 0; }
.icon-btn { width: 27px; height: 27px; border: 1px solid #7d7d7d; border-radius: 7px; background: #f7f7f7; margin-right: 3px; display: flex; align-items: center; justify-content: center; flex: none; }
.delete { border-color: #2d88dc; margin: 0 13px 0 auto; }
.list-wrap { display: flex; height: 749px; overflow: hidden; background: #f0f0f0; flex: none; border-bottom: 1px solid #fff; }
.model-list { width: 459px; border: solid #7b7b7b; border-width: 0 1px; height: 749px; padding-top: 1px; overflow: hidden; }
.model { height: 62.500px; background: #efefef; border-bottom: 2px solid #7b7b7b; padding: 3px 4px 0 3px; }
.model:last-child { border-bottom: 0; }
.selected { background: #c0dff3; }
.line { display: flex; align-items: center; height: 27px; white-space: nowrap; }
.line b { margin: 0 8.500px 0 7px; color: #000; }
.line em { margin-left: auto; margin-right: 2px; }
.line s { margin-left: 1px; }
.sub em { margin-right: 0; }
.sub span + span { margin-left: 5px; }
.fav { width: 27px; height: 27px; border: 1px solid #858585; border-radius: 6px; background: #f5f5f5; flex: none; }
.fav svg { width: 25px; height: 25px; }
.scrollbar { width: 21px; display: flex; flex-direction: column; align-items: center; padding: 9px 1px 8px 0; }
.up { border: 5px solid transparent; border-bottom-color: #a0a0a0; border-top: 0; }
.thumb { width: 17px; height: 265px; margin: 7px 0 auto; background: #c0c0c0; }
.down { border: 5px solid transparent; border-top-color: #4e4e4e; border-bottom: 0; }
.status { height: 26px; flex: none; background: #e6e6e6; border-top: 1px solid #bfbfbf; }
.status.left { padding: 8px; margin-top: auto; }

.documents { flex: 1; display: flex; flex-direction: column; min-width: 0; }
.doc-tabs { height: 29px; flex: none; display: flex; background: #fff; border-bottom: 1px solid #bfbfbf; align-items: flex-start; padding-left: 4px; }
.doc-tabs > svg { margin: 8px 20px 0 auto; }
.grip { width: 5px; height: 13px; margin: 8px 4px 0 0; flex: none; background: repeating-linear-gradient(#bfbfbf 0 1px, #f4f4f4 1px 3px); }
.doc-tab { height: 28px; border-top: 4px solid #9c9c9c; border-right: 1px solid #bfbfbf; border-left: 1px solid #bfbfbf; background: #e6e6e6; padding: 4px 0 0 9px; color: #616161; flex: none; margin-right: 6px; white-space: nowrap; line-height: 17px; }
.t1 { width: 101px; } .t2 { width: 109px; } .t3 { width: 102px; } .t4 { width: 101px; } .t5 { width: 102px; } .t6 { width: 102px; } .t7 { width: 102px; }
.t4 { margin-right: 5px; }
.active { background: #f4f4f4; border-top-color: #268cdd; height: 29px; margin-bottom: -1px; }
.doc-body { height: 785px; flex: none; display: flex; padding: 4px 4px 4px; background: #f5f5f5; border-bottom: 1px solid #fff; }
.main-column { width: 715px; flex: none; }
.panel { display: flex; flex-direction: column; }
.summary-panel { height: 387px; margin-bottom: 2px; }
.confusion-panel { height: 387px; border-top: 1px solid #7f7f7f; }
.panel-tabs { height: 27px; flex: none; display: flex; padding-left: 4px; }
.confusion-panel .panel-tabs { height: 26px; }
.panel-tabs .grip { margin-top: 7px; margin-right: 3px; }
.panel-tab { display: flex; align-items: center; height: 28px; background: #fff; border: 1px solid #bfbfbf; border-bottom: 0; padding: 0 5px 2px 10px; color: #616161; position: relative; white-space: nowrap; }
.panel-tab svg { margin-left: 9px; }
.focused { border-top: 0; color: #222; margin-top: -1px; padding-bottom: 1px; box-shadow: inset 0 4px #004783; }
.splitter-dot { width: 2px; height: 1px; margin-left: 126px; background: #222; }
.panel-body { flex: 1; min-height: 0; border: 1px solid #bfbfbf; background: #f0f0f0; }
.summary { padding: 15px 0 0 27px; line-height: 18px; color: #000; }
.summary h3 { font-size: 15px; line-height: 18px; color: #0068d6; margin: 18px 0 0 0; }
.summary dl { display: grid; grid-template-columns: 155px 1fr; }
.summary ul { list-style: none; margin-top: 12.500px; font-weight: bold; }
.summary li { height: 27.500px; line-height: 27px; display: flex; align-items: center; }
.summary li::before { content: ""; border: 5px solid transparent; border-left: 6px solid #5a5a5a; border-right: 0; margin-right: 8.500px; }
.split-body { display: flex; }
.split-body .plot-options { flex: 1; display: flex; flex-direction: column; }
.option-bar { height: 31px; flex: none; display: flex; justify-content: flex-end; padding-top: 3px; }
.option-bar .icon-btn { margin-right: 2px; }
.confusion-options .icon-btn { width: 26px; height: 26px; margin-right: 3px; }
.option-box { flex: 1; border: 1px solid #7f7f7f; border-bottom: 0; color: #000; }
h4 { font-size: 15px; }
a { color: #0064d2; font-weight: bold; text-decoration: underline; text-underline-offset: 2px; }
.confusion-options .option-box { padding: 13px 0 0 12px; margin-right: 1px; }
.confusion-options h4 { line-height: 20px; margin-bottom: 5px; }
.confusion-options label { display: flex; align-items: center; line-height: 30px; margin-bottom: 15px; white-space: nowrap; }
.confusion-options a { line-height: 30px; display: block; margin-top: 19px; }
.radio { width: 18px; height: 18px; border: 1px solid #5a5a5a; border-radius: 50%; background: #fff; margin: 0 12px 0 1px; flex: none; }
.on { border-color: #2d88dc; background: radial-gradient(#222 0 3.500px, #fff 4.500px); }
.roc-panel { width: 716px; border-left: 1px solid #7f7f7f; flex: none; }
.roc-panel .panel-body { border-left: 0; }
.roc-panel .panel-tabs { padding-left: 3px; }
.roc-panel .panel-tab { padding-left: 9px; }
.roc-options .option-box { padding: 14px 13px 0; }
.roc-options h4, .roc-options p { line-height: 18px; }
.roc-options p { margin-top: 9px; }
.roc-options .select { height: 28px; margin-top: 7px; padding: 0 9px 0 5px; }
.roc-options .negative { margin-top: 16px; }
.listbox { height: 259px; margin-top: 8px; border: 1px solid #7f7f7f; background: #fff; display: flex; flex-direction: column; }
.listrow { height: 28px; border-bottom: 1px solid #7f7f7f; line-height: 26px; padding-left: 4px; color: #333; }
.hscroll { height: 22px; margin-top: auto; background: #f0f0f0; display: flex; align-items: center; padding: 0 8px; }
.prev { border: 5px solid transparent; border-right-color: #999; border-left: 0; }
.next { border: 5px solid transparent; border-left-color: #444; border-right: 0; }
.hthumb { width: 157px; height: 17px; background: #c0c0c0; margin: 0 auto 0 8px; }
.roc-options a { display: block; margin-top: 26px; line-height: 18px; }

/* Chart text */
.chart text { font-family: "Liberation Sans", Arial, sans-serif; text-anchor: middle; }
.chart .plot-title { font-weight: bold; fill: #000; }
.chart .sz17 { font-size: 17px; } .chart .sz18 { font-size: 18px; }
.chart .axis { fill: #333; }
.tick text { font-size: 16px; fill: #444; }
.cell text { fill: #222; }
.cell .light { fill: #e8f2fa; }
.chart .end text { text-anchor: end; }
.chart .note { text-anchor: start; font-size: 16.500px; fill: #222; }
.chart .legend text { text-anchor: start; font-size: 15px; fill: #000; }

.facts { display: flex; padding-left: 4px; border-top-color: #7f7f7f; color: #333; line-height: 30px; white-space: nowrap; overflow: hidden; }
.facts span { flex: none; }
.f1 { width: 151px; } .f2 { width: 180px; } .f3 { width: 114px; } .f4 { width: 109px; } .f5 { width: 137px; } .f6 { width: 199px; }

/* Taskbar */
.taskbar { height: 60px; background: #202020; display: flex; padding-left: 744px; color: #fff; font: 14px/20px "Open Sans", sans-serif; }
.task-icons { display: flex; gap: 7px; padding-top: 5px; }
.task { width: 48px; height: 50px; display: flex; flex-direction: column; align-items: center; padding-top: 9px; border-radius: 5px; }
.running::after, .current::after { content: ""; width: 8px; height: 4px; border-radius: 2px; background: #9a9a9a; margin-top: 4px; }
.current { background: #303030; }
.current::after { width: 20px; background: #4cc2ff; }
.tray { display: flex; align-items: center; margin-left: auto; padding-right: 24px; }
.lang { margin: 0 27px 0 23px; font-size: 14px; letter-spacing: -.3px; }
.clock { width: 84px; text-align: right; display: flex; flex-direction: column; letter-spacing: 0; }
```
